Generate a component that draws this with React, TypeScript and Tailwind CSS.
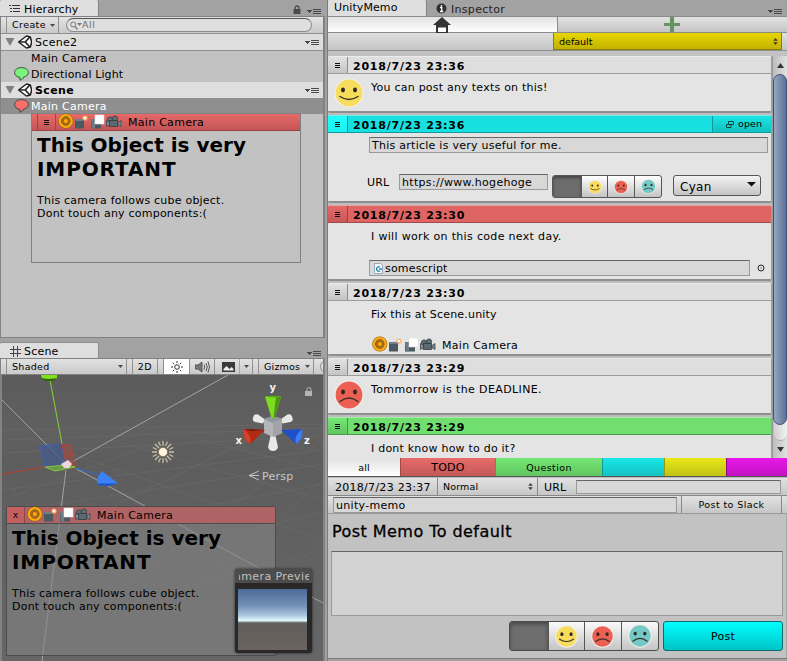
import React from "react";

const FACE_COLORS = { yellow: "#f8dc5c", red: "#ec6053", teal: "#74c9c6" } as const;

function Face({ color, size }: { color: keyof typeof FACE_COLORS; size: number }) {
  const happy = color === "yellow";
  return (
    <svg width={size} height={size} viewBox="0 0 30 30" className="shrink-0">
      <circle cx="15" cy="15" r="14.6" fill="#f2f0ea" />
      <circle cx="15" cy="15" r="13.4" fill={FACE_COLORS[color]} />
      <ellipse cx="9" cy="12" rx="2" ry="2.400" fill="#2e2a20" />
      <ellipse cx="21" cy="12" rx="2" ry="2.400" fill="#2e2a20" />
      <path
        d={happy ? "M6 18.500 Q15 24.500 24 18.500" : "M6 21.500 Q15 14.500 24 21.500"}
        fill="none"
        stroke="#3a3326"
        strokeWidth="1.500"
        strokeLinecap="round"
      />
    </svg>
  );
}

function ObjectIcons() {
  return (
    <svg width="64" height="18" viewBox="0 0 64 18" className="shrink-0">
      <circle cx="7.800" cy="8" r="7.600" fill="#8a5a14" />
      <circle cx="7.800" cy="8" r="5.800" fill="none" stroke="#ffab10" strokeWidth="2.600" />
      <circle cx="7.800" cy="8" r="4.300" fill="#b07420" stroke="#8a5a14" strokeWidth="0.800" />
      <circle cx="7.800" cy="8" r="2.600" fill="#ffa50a" stroke="#7c5520" strokeWidth="0.800" />
      <rect x="17" y="6" width="9" height="9.500" fill="#4b5960" />
      <path d="M17 6h9l-1.500 2H18z" fill="#73828a" />
      <circle cx="27" cy="5" r="2.600" fill="#ffae60" />
      <rect x="25.800" y="3.800" width="2.400" height="2.400" fill="#fff" />
      <rect x="33" y="6" width="10" height="9.500" fill="#4b5960" />
      <path d="M33 6h4v9.500h-3z" fill="#6d7b82" />
      <rect x="37" y="2" width="9" height="9" fill="#fff" stroke="#e2e2e2" strokeWidth="0.600" />
      <circle cx="52" cy="6.500" r="2.600" fill="#606e76" stroke="#323c42" strokeWidth="0.800" />
      <circle cx="57" cy="5.500" r="2.600" fill="#606e76" stroke="#323c42" strokeWidth="0.800" />
      <rect x="51.500" y="7.500" width="8" height="6" fill="#5b6970" stroke="#323c42" strokeWidth="0.800" />
      <path d="M48.500 7.500l3 1.500v3l-3 1.500z M60 9.500l3-2v6l-3-1.500z" fill="#7d8d96" stroke="#323c42" strokeWidth="0.700" />
    </svg>
  );
}

function Burger() {
  return (
    <svg width="5" height="5" viewBox="0 0 5 5" shapeRendering="crispEdges">
      <path d="M0 0h5v1H0zM0 2h5v1H0zM0 4h5v1H0z" fill="#111" />
    </svg>
  );
}

function PaneMenu() {
  return (
    <svg width="14" height="7" viewBox="0 0 14 7" className="shrink-0" shapeRendering="crispEdges">
      <path d="M0 2h5v1H4v1H3v1H2V4H1V3H0z" fill="#4a4a4a" />
      <path d="M6 1h8v1H6zM6 3h8v1H6zM6 5h8v1H6z" fill="#4a4a4a" />
    </svg>
  );
}

function Caret() {
  return (
    <svg width="5" height="3" viewBox="0 0 5 3" className="shrink-0">
      <path d="M0 0h5L2.500 3z" fill="#4c4c4c" />
    </svg>
  );
}

function UpDown() {
  return (
    <svg width="5" height="7" viewBox="0 0 5 7" className="shrink-0">
      <path d="M.3 2.800h4.400L2.500 0zM.3 4.200h4.400L2.500 7z" fill="#3a3a2a" />
    </svg>
  );
}

function UnityLogo() {
  return (
    <svg width="14" height="14" viewBox="0 0 14 14" className="shrink-0">
      <path d="M.6 7L8.500 1l3.800 1 1.100 4v2l-1.100 4-3.800 1z" fill="#fff" stroke="#222" strokeWidth="1.500" strokeLinejoin="round" />
      <path d="M1 7h6.200L11.800 2M7.200 7l4.600 5" fill="none" stroke="#222" strokeWidth="1.700" />
    </svg>
  );
}

function Balloon({ fill }: { fill: string }) {
  return (
    <svg width="15" height="14" viewBox="0 0 15 14" className="shrink-0">
      <path d="M7.500.6C3.500.6.6 2.700.6 5.600c0 2.500 2.300 4.600 5.400 4.800v2.700c2-.2 3.300-1.600 3.700-3 2.900-.7 4.700-2.400 4.700-4.600C14.400 2.700 11.500.6 7.500.6z" fill={fill} stroke="#3d4a3d" strokeWidth="1" />
    </svg>
  );
}

function SceneHeader({ name, bold }: { name: string; bold?: boolean }) {
  return (
    <div className={"flex h-full items-center bg-[#dedede] pl-[4px] pr-[4px] " + (bold ? "font-bold tracking-[0.400px]" : "tracking-[0.300px]")}>
      <svg width="10" height="8" viewBox="0 0 10 8"><path d="M.5 0h9L5 8z" fill="#818181" /></svg>
      <span className="ml-[3px]"><UnityLogo /></span>
      <span className="ml-[3px]">{name}</span>
      <span className="ml-auto"><PaneMenu /></span>
    </div>
  );
}

function NoteBody() {
  return (
    <div className="pl-[5px] pt-[2px] text-black">
      <div className="text-[20px] font-bold leading-[24px]">
        <div>This Object is very</div>
        <div className="tracking-[0.900px]">IMPORTANT</div>
      </div>
      <div className="mt-[13px] text-[11px] leading-[13px] tracking-[0.220px]">
        This camera follows cube object.<br />Dont touch any components:(
      </div>
    </div>
  );
}

function Hierarchy() {
  return (
    <section className="flex h-[338px] shrink-0 flex-col">
      <div className="flex h-[16px]">
        <div className="flex w-[99px] items-center rounded-t-[2px] border-r border-[#838383] bg-[#dedede] pl-[9px] pt-[2px] text-[11px]">
          <svg width="12" height="8" viewBox="0 0 12 8" shapeRendering="crispEdges">
            <path d="M0 0h2v1H0zM3 0h8v1H3zM1 3h2v1H1zM4 3h7v1H4zM1 6h2v1H1zM4 6h7v1H4z" fill="#333" />
          </svg>
          <span className="ml-[3px] tracking-[0.150px]">Hierarchy</span>
        </div>
        <div className="ml-auto flex items-center gap-[6px] pr-[4px] pt-[4px]">
          <svg width="8" height="10" viewBox="0 0 8 10"><path d="M.5 4h7v5h-7z" fill="#4a4a4a" /><path d="M2 4.500V3a2 2 0 0 1 4 0v1.500" fill="none" stroke="#4a4a4a" strokeWidth="1.300" /></svg>
          <div className="pt-[2px]"><PaneMenu /></div>
        </div>
      </div>
      <div className="flex grow flex-col border border-r-2 border-[#828282] bg-[#c2c2c2]">
        <div className="flex h-[16px] items-center bg-gradient-to-b from-[#e4e4e4] to-[#c9c9c9]">
          <div className="ml-[5px] flex h-full w-[53px] items-center justify-between border-x border-[#909090] pl-[5px] pr-[3px] text-[9.500px] tracking-[0.400px]">
            Create <Caret />
          </div>
          <div className="ml-[7px] flex h-[14px] w-[246px] items-center rounded-full border border-[#8d8d8d] border-t-[#555] bg-[#dfdfdf] pl-[3px] text-[9.500px] text-[#6f6f6f]">
            <svg width="12" height="9" viewBox="0 0 12 9"><circle cx="3.200" cy="3.500" r="2.500" fill="none" stroke="#777" /><path d="M5 5.500l2.500 3" stroke="#777" strokeWidth="1.200" /><path d="M7 2h5L9.500 5z" fill="#777" /></svg>
            <span className="tracking-[0.500px]">All</span>
          </div>
        </div>
        <div className="flex flex-col text-[11px]">
          <div className="h-[18px] border-y border-[#909090]"><SceneHeader name="Scene2" /></div>
          <div className="flex h-[15px] items-center pl-[30px] tracking-[0.250px]">Main Camera</div>
          <div className="flex h-[16px] items-center gap-[2px] pl-[13px] tracking-[0.100px]"><Balloon fill="#79f57b" />Directional Light</div>
          <div className="h-[16px]"><SceneHeader name="Scene" bold /></div>
          <div className="flex h-[16px] items-center gap-[2px] bg-[#8f8f8f] pl-[13px] tracking-[0.250px] text-white"><Balloon fill="#fa6e6c" />Main Camera</div>
        </div>
        <div className="ml-[30px] mt-[-1px] h-[150px] w-[270px] border border-[#808080]">
          <div className="flex h-[17px] items-center border-b border-[#944] bg-gradient-to-b from-[#e76969] to-[#c45656] text-[11px]">
            <div className="ml-[5px] flex h-full w-[19px] items-center justify-center border-x border-[#9c4545]"><Burger /></div>
            <div className="ml-[2px] flex"><ObjectIcons /></div>
            <span className="ml-[6px] pt-px tracking-[0.280px]">Main Camera</span>
          </div>
          <NoteBody />
        </div>
      </div>
    </section>
  );
}

function SceneDrawing() {
  return (
    <svg width="321" height="286" viewBox="2 375 321 286" className="block">
      <defs>
        <linearGradient id="ground" x1="0" y1="0" x2="0" y2="1">
          <stop offset="0" stopColor="#5b5b5b" />
          <stop offset="0.200" stopColor="#606060" />
          <stop offset="0.300" stopColor="#5d5d5d" />
          <stop offset="1" stopColor="#666" />
        </linearGradient>
      </defs>
      <rect x="2" y="375" width="321" height="286" fill="url(#ground)" />
      <g stroke="#6d6d6d" strokeWidth="0.800" opacity="0.700">
        <path d="M2 430L323 424M2 440L323 428M2 453L323 436M2 490L323 450M2 512L323 464M2 545L323 484M2 590L323 512M2 640L323 550M90 661L323 590" />
        <path d="M2 480L190 661M2 545L110 661M30 440L323 540M110 440L323 500M200 440L323 470M90 470L323 640M60 480L270 661M190 430L2 500M270 430L2 560M323 440L20 661M323 480L110 661M323 540L200 661" />
      </g>
      <path d="M2 400L65 463M228 375L70 463M75 468L323 603M66 470L42 661" stroke="#a3a3a3" />
      <path d="M2 474L45 467" stroke="#b8402c" />
      <path d="M50 380L62 444" stroke="#7fc83a" strokeWidth="1.200" />
      <path d="M41 375h16v3l-3 2H45l-3-2z" fill="#7fe01c" />
      <path d="M42 378q7 2 14 0l-2 3h-9z" fill="#2f6410" />
      <path d="M40 446l22-2 4 22-21 1z" fill="#44598e" fillOpacity="0.750" stroke="#3c62c0" />
      <path d="M62 444l9 1.500 4 22-9-4z" fill="#984b47" fillOpacity="0.700" stroke="#b8432f" />
      <path d="M45 467l21-2 9 2-20 4z" fill="#6a9a45" stroke="#80c83c" />
      <path d="M61 464l7-4 4 4-3 4h-5z" fill="#efd6dc" />
      <path d="M75 468L99 475" stroke="#3267c9" strokeWidth="1.200" />
      <path d="M102 471Q96 477 98 485L108 486 118 483.500z" fill="#3a82f7" />
      <path d="M98 483.500L118 483.500 108 486 98 485z" fill="#1c52bd" />
      <g stroke="#c8c0a4" strokeWidth="1.300">
        <path d="M163 441v5M163 458v5M152 452h5M169 452h5M155 444l4 4M167 456l4 4M171 444l-4 4M159 456l-4 4M158.500 441.800l2 4M167.500 441.800l-2 4M158.500 462.200l2-4M167.500 462.200l-2-4M152.800 447.500l4 2M173.200 447.500l-4 2M152.800 456.500l4-2M173.200 456.500l-4-2" />
      </g>
      <circle cx="163" cy="452" r="4.600" fill="#fff3dc" stroke="#857b62" strokeWidth="1" />
      <path d="M253 418q1-5 5-3.500l7 5-2 4-8-1.500q-3-1-2-4zM292.500 418q-1-5-5-3.500l-7 5 2 4 8-1.500q3-1 2-4zM271 434h4l3 13q-1 4-5 4t-5-4z" fill="#e8e8e8" />
      <path d="M264 419l9-3 9 3v14l-9 4-9-4z" fill="#b3b5b8" />
      <path d="M264 419l9-3 9 3-9 4z" fill="#8f979d" />
      <path d="M273 423l9-4v14l-9 4z" fill="#a2a4a8" />
      <path d="M265 396.500h16L274.500 418h-3z" fill="#7ddb22" />
      <path d="M276 396.500h5L274.500 418h-1z" fill="#4c9610" />
      <path d="M265 396.500q8-1.500 16 0-8 2-16 0z" fill="#5cab18" />
      <path d="M244 429l21 1-15 14q-8-5-6-15z" fill="#b02a15" />
      <path d="M244 429q-2 10 6 15 3-7-6-15z" fill="#d8402a" />
      <path d="M244 429l21 1-13 1z" fill="#6e150a" />
      <path d="M302 429l-21 1 15 14q8-5 6-15z" fill="#1f50c8" />
      <path d="M302 429q2 10-6 15-3-7 6-15z" fill="#3f7df5" />
      <g fill="#f4f4f4" fontFamily="'DejaVu Sans'" fontWeight="bold" fontSize="10">
        <text x="269.500" y="391">y</text>
        <text x="235.500" y="444">x</text>
        <text x="304" y="444">z</text>
      </g>
      <path d="M259 471l-10 4.500 10 4.500M249 475.500h10" stroke="#c0c0c0" fill="none" />
      <text x="262" y="480" fill="#c6c6c6" fontFamily="'DejaVu Sans'" fontSize="11" letterSpacing="0.250">Persp</text>
      <rect x="305" y="391" width="7" height="5" fill="#b4b4b4" />
      <path d="M307 391v-1.500a2 2 0 0 1 4 0V391" fill="none" stroke="#b4b4b4" />
    </svg>
  );
}

function SceneView() {
  return (
    <section className="flex grow flex-col pt-[4px]">
      <div className="flex h-[16px]">
        <div className="flex w-[99px] items-center rounded-t-[2px] border-r border-t border-[#8d8d8d] bg-[#dedede] pl-[10px] pt-[2px] text-[11px]">
          <svg width="11" height="11" viewBox="0 0 11 11"><path d="M3.500 0v11M7.500 0v11M0 3.500h11M0 7.500h11" stroke="#444" /></svg>
          <span className="ml-[3px] tracking-[0.200px]">Scene</span>
        </div>
        <div className="ml-auto flex items-center pr-[4px] pt-[7px]"><PaneMenu /></div>
      </div>
      <div className="flex h-[17px] w-[325px] overflow-hidden border border-r-2 border-[#828282] bg-gradient-to-b from-[#e2e2e2] to-[#cacaca] text-[9.500px] tracking-[0.500px]">
        <div className="ml-[5px] flex w-[121px] shrink-0 items-center justify-between border-x border-[#909090] pl-[5px] pr-[3px] tracking-[0.300px]">Shaded <Caret /></div>
        <div className="ml-[5px] flex w-[26px] shrink-0 items-center justify-center border-x border-[#909090]">2D</div>
        <div className="ml-[5px] flex w-[27px] shrink-0 items-center justify-center border-x border-[#909090] bg-white">
          <svg width="12" height="12" viewBox="0 0 12 12"><circle cx="6" cy="6" r="2.300" fill="none" stroke="#333" /><path d="M6 0v2M6 10v2M0 6h2M10 6h2M1.800 1.800l1.300 1.300M8.900 8.900l1.300 1.300M10.200 1.800L8.900 3.100M3.100 8.900l-1.300 1.300" stroke="#333" /></svg>
        </div>
        <div className="flex w-[25px] shrink-0 items-center justify-center border-r border-[#909090]">
          <svg width="15" height="12" viewBox="0 0 15 12"><path d="M0 4h3l4-3v10l-4-3H0z" fill="#777" stroke="#444" strokeWidth="0.800" /><path d="M9 3.500q1.500 2.500 0 5M11 2q2.500 4 0 8M13 .5q3 5.500 0 11" fill="none" stroke="#555" /></svg>
        </div>
        <div className="flex w-[38px] shrink-0 items-center gap-[4px] border-r border-[#909090] pl-[7px]">
          <svg width="13" height="10" viewBox="0 0 13 10" className="shrink-0"><rect width="13" height="10" fill="#3a3a3a" /><path d="M1.500 8.500V7l3-3 3 3 2-2 2 2v1.500z" fill="#eee" /></svg>
          <div className="h-full w-px bg-[#aaa]" />
          <Caret />
        </div>
        <div className="ml-[5px] flex w-[56px] shrink-0 items-center justify-between border-x border-[#909090] pl-[5px] pr-[3px] tracking-[0.200px]">Gizmos <Caret /></div>
        <div className="ml-[6px] mt-px h-[13px] w-[24px] shrink-0 rounded-full border border-[#888] bg-[#ddd]" />
      </div>
      <div className="relative grow overflow-hidden border-r-2 border-[#828282] bg-[#828282] pl-[2px]">
        <SceneDrawing />
        <div className="absolute left-[6px] top-[131px] h-[150px] w-[270px] rounded-t-[2px] border border-[#4c4c4c] bg-[#848484]/60">
          <div className="flex h-[17px] items-center border-b border-[#4c4c4c] bg-[#b86262]/85 text-[11px]">
            <div className="flex h-full w-[18px] items-center justify-center border-r border-[#8d4747] bg-[#c45f5f] text-[9px]">x</div>
            <div className="ml-[2px] flex"><ObjectIcons /></div>
            <span className="ml-[6px] pt-px tracking-[0.280px]">Main Camera</span>
          </div>
          <NoteBody />
        </div>
        <div className="absolute left-[235px] top-[194px] flex h-[84px] w-[77px] flex-col rounded-[3px] bg-[#282828] pb-[3px] shadow-[0_0_3px_#222]">
          <div className="mb-[6px] flex h-[14px] items-center justify-center overflow-hidden rounded-t-[3px] bg-[#4c4c4c] pt-px text-[11px] tracking-[0.400px] text-[#c0c0c0]">
            <div className="flex h-[13px] w-[70px] items-center justify-center overflow-hidden whitespace-nowrap"><span className="shrink-0">Camera Preview</span></div>
          </div>
          <div className="ml-[3px] h-[61px] w-[69px] bg-[linear-gradient(to_bottom,#4c6a98_0%,#7491b8_28%,#a9c6dd_43%,#e2fbff_52%,#8d9a98_54%,#615d5a_56%,#6b6460_100%)]" />
        </div>
      </div>
    </section>
  );
}

const HEADER_TONES = {
  gray: "bg-[#dedede] border-[#9c9c9c]",
  cyan: "bg-[#18e0e0] border-[#119a9a]",
  red: "bg-[#df6464] border-[#a04a4a]",
  green: "bg-[#70df70] border-[#4d9a4d]",
} as const;

const BUTTON_TONES = {
  gray: "from-[#e2e2e2] to-[#c4c4c4] border-[#8c8c8c]",
  cyan: "from-[#20ffff] to-[#1cf0f0] border-[#119a9a]",
  red: "from-[#e66868] to-[#c65858] border-[#984545]",
  green: "from-[#74e874] to-[#62c462] border-[#4a934a]",
} as const;

type CardProps = {
  tone: keyof typeof HEADER_TONES;
  time: string;
  height: string;
  action?: React.ReactNode;
  children: React.ReactNode;
};

function Card({ tone, time, height, action, children }: CardProps) {
  return (
    <article className={"flex shrink-0 flex-col overflow-hidden rounded-[2px] border-b-2 border-r border-b-[#8f8f8f] border-r-[#a0a0a0] bg-[#e4e4e4] " + height}>
      <div className={"flex h-[18px] shrink-0 items-center border-b border-t border-t-white/40 " + HEADER_TONES[tone]}>
        <div className={"flex h-full w-[20px] items-center justify-center border-r bg-gradient-to-b " + BUTTON_TONES[tone]}><Burger /></div>
        <span className="ml-[5px] pt-[2px] text-[11px] font-bold tracking-[0.780px]">{time}</span>
        {action}
      </div>
      <div className="grow text-[11px]">{children}</div>
    </article>
  );
}

const FIELD = "flex items-center border border-[#9a9a9a] border-t-[#666] bg-[#d8d8d8] ";

function CardList() {
  return (
    <div className="flex h-[402px] overflow-hidden">
      <div className="flex w-[444px] flex-col gap-[2px] overflow-hidden bg-[#bdbdbd]">
        <Card tone="gray" time="2018/7/23 23:36" height="h-[57px]">
          <div className="flex pl-[6px] pt-[4px]"><Face color="yellow" size={30} /><span className="ml-[7px] mt-[4px] tracking-[0.240px]">You can post any texts on this!</span></div>
        </Card>
        <Card tone="cyan" time="2018/7/23 23:36" height="h-[88px]"
          action={<div className="ml-auto flex h-full w-[59px] items-center gap-[4px] border-l border-[#119a9a] bg-gradient-to-b from-[#1be6e6] to-[#14c0c0] pl-[13px] text-[9.500px] tracking-[0.100px]">
            <svg width="8" height="7" viewBox="0 0 8 7"><path d="M2.500.5h5v3h-5zM5 3.500v3H.5v-3h2" fill="none" stroke="#144" /></svg>open
          </div>}>
          <div className={FIELD + "ml-[41px] mt-[4px] h-[16px] w-[399px] pl-[2px] tracking-[0.260px]"}>This article is very useful for me.</div>
          <div className="mt-[21px] flex pl-[39px]">
            <span className="mt-[3px] w-[32px] tracking-[0.200px]">URL</span>
            <div className={FIELD + "h-[16px] w-[149px] pl-[2px] tracking-[0.320px]"}>https://www.hogehoge</div>
            <div className="ml-[4px] mt-px flex h-[23px] w-[110px] overflow-hidden rounded-[3px] border border-[#555] bg-gradient-to-b from-white to-[#c4c4c4]">
              <div className="w-[28px] bg-[#6c6c6c] shadow-[inset_0_2px_3px_#444]" />
              <div className="flex w-[27px] items-center justify-center border-l border-[#555]"><Face color="yellow" size={14} /></div>
              <div className="flex w-[27px] items-center justify-center border-l border-[#555]"><Face color="red" size={14} /></div>
              <div className="flex w-[27px] items-center justify-center border-l border-[#555]"><Face color="teal" size={15} /></div>
            </div>
            <div className="ml-[11px] mt-px flex h-[21px] w-[88px] items-center justify-between rounded-[3px] border border-[#555] bg-gradient-to-b from-[#f4f4f4] to-[#c4c4c4] pl-[6px] pr-[4px] pt-[2px] text-[12px] tracking-[0.300px]">
              Cyan <svg width="9" height="5" viewBox="0 0 9 5" className="mb-[4px]"><path d="M0 0h9L4.500 4.500z" fill="#111" /></svg>
            </div>
          </div>
        </Card>
        <Card tone="red" time="2018/7/23 23:30" height="h-[76px]">
          <div className="ml-[43px] mt-[7px] leading-[13px] tracking-[0.330px]">I will work on this code next day.</div>
          <div className="mt-[17px] flex items-center">
            <div className={FIELD + "ml-[41px] h-[16px] w-[381px] pl-[4px] tracking-[0.200px]"}>
              <svg width="9" height="11" viewBox="0 0 9 11" className="mr-[2px]"><path d="M.5.5h6l2 2v8h-8z" fill="#f2f7fa" stroke="#9ab" /><path d="M6 4a2.300 2.300 0 1 0 0 4M5 6h3" fill="none" stroke="#2687b5" strokeWidth="1.400" /></svg>
              somescript
            </div>
            <svg width="8" height="8" viewBox="0 0 8 8" className="ml-[7px]"><circle cx="4" cy="4" r="3" fill="none" stroke="#222" /><rect x="3.500" y="3.500" width="1" height="1" fill="#222" /></svg>
          </div>
        </Card>
        <Card tone="gray" time="2018/7/23 23:30" height="h-[73px]">
          <div className="ml-[43px] mt-[7px] leading-[13px] tracking-[0.180px]">Fix this at Scene.unity</div>
          <div className="ml-[44px] mt-[15px] flex items-center"><ObjectIcons /><span className="ml-[6px] mt-px tracking-[0.280px]">Main Camera</span></div>
        </Card>
        <Card tone="gray" time="2018/7/23 23:29" height="h-[57px]">
          <div className="flex pl-[6px] pt-[4px]"><Face color="red" size={30} /><span className="ml-[7px] mt-[4px] tracking-[0.390px]">Tommorrow is the DEADLINE.</span></div>
        </Card>
        <Card tone="green" time="2018/7/23 23:29" height="h-[57px]">
          <div className="ml-[43px] mt-[7px] leading-[13px] tracking-[0.220px]">I dont know how to do it?</div>
        </Card>
      </div>
      <div className="flex w-[15px] flex-col items-center border-l border-[#999] bg-gradient-to-r from-[#bdbdbd] to-[#e2e2e2]">
        <div className="flex h-[18px] shrink-0 items-center"><svg width="7" height="5" viewBox="0 0 7 5"><path d="M0 5h7L3.500 0z" fill="#333" /></svg></div>
        <div className="z-10 h-[351px] w-[14px] shrink-0 rounded-full border border-[#3f5374] bg-gradient-to-r from-[#96a7c2] to-[#5c7196]" />
        <div className="-mt-2 h-[24px] w-[13px] shrink-0 rounded-b-full border-b border-[#aaa] bg-gradient-to-r from-[#d0d0d0] to-[#f2f2f2]" />
        <div className="mt-[6px]"><svg width="7" height="5" viewBox="0 0 7 5"><path d="M0 0h7L3.500 5z" fill="#333" /></svg></div>
      </div>
    </div>
  );
}

function MemoPane() {
  return (
    <section className="flex w-[459px] flex-col">
      <div className="flex h-[16px] text-[11px]">
        <div className="w-[99px] rounded-tr-[2px] border-r border-[#808080] bg-[#dedede] pl-[6px] leading-[16px] tracking-[0.100px]">UnityMemo</div>
        <div className="ml-[9px] flex items-center gap-[4px] text-[#222]">
          <svg width="11" height="11" viewBox="0 0 11 11"><circle cx="5.500" cy="5.500" r="5" fill="#303030" /><path d="M5.500 2v1.500M4 4.500h1.700V8M4 8.500h3.300" stroke="#fff" strokeWidth="1.300" fill="none" /></svg>
          <span className="mt-[2px] tracking-[0.300px]">Inspector</span>
        </div>
        <div className="ml-auto flex items-center pr-[5px] pt-[7px]"><PaneMenu /></div>
      </div>
      <div className="flex h-[17px] border-y border-[#8a8a8a]">
        <div className="flex w-[230px] items-center justify-center border-r border-[#8a8a8a] bg-gradient-to-b from-[#e2e2e2] to-white pr-px">
          <svg width="18" height="16" viewBox="0 0 18 16"><path d="M9 0l9 8h-3v8H3V8H0z" fill="#333" /><path d="M5 10.500h8V15H5z" fill="#fff" /></svg>
        </div>
        <div className="flex grow items-center justify-center bg-gradient-to-b from-[#e2e2e2] to-[#c4c4c4] pr-px">
          <svg width="16" height="15" viewBox="0 0 16 15"><path d="M6 0h4v6h6v3h-6v6H6V9H0V6h6z" fill="#669264" /></svg>
        </div>
      </div>
      <div className="flex h-[18px] border-b border-[#8f8f8f] bg-gradient-to-b from-[#e0e0e0] to-[#c4c4c4]">
        <div className="ml-[225px] flex w-[229px] items-center justify-between border-x border-b border-[#8b7d05] bg-gradient-to-b from-[#e8d600] to-[#c2b200] pl-[5px] pr-[3px] pt-px text-[9.500px]">
          default <UpDown />
        </div>
      </div>
      <div className="h-[5px] bg-[#c2c2c2]" />
      <CardList />
      <div className="flex h-[18px] text-[9.500px] tracking-[0.200px]">
        <div className="flex w-[72px] items-center justify-center bg-gradient-to-b from-[#e2e2e2] to-white pt-px">all</div>
        <div className="flex w-[95px] items-center justify-center border-l border-[#a04a4a] bg-gradient-to-b from-[#e86b6b] to-[#c45858] pt-px text-[11px]">TODO</div>
        <div className="flex w-[107px] items-center justify-center border-l border-[#4d9a4d] bg-gradient-to-b from-[#74e874] to-[#62c462] pt-px tracking-[0.400px]">Question</div>
        <div className="w-[62px] border-l border-[#119a9a] bg-gradient-to-b from-[#18e8e8] to-[#14c2c2]" />
        <div className="w-[62px] border-l border-[#99990e] bg-gradient-to-b from-[#e8e818] to-[#c2c214]" />
        <div className="grow border-l border-[#8a0e8a] bg-gradient-to-b from-[#e818e8] to-[#c214c2]" />
      </div>
      <div className="h-[2px] border-b border-white/60 bg-[#555]" />
      <div className="flex h-[18px] items-center border-b border-[#888] bg-gradient-to-b from-[#e2e2e2] to-[#c6c6c6] text-[11px]">
        <div className="flex h-full w-[110px] items-center border-r border-[#888] pl-[7px] pt-[2px] tracking-[0.280px]">2018/7/23 23:37</div>
        <div className="flex h-full w-[100px] items-center justify-between border-r border-[#888] pl-[5px] pr-[4px] text-[9.500px] tracking-[0.150px]">Normal <UpDown /></div>
        <span className="ml-[6px] w-[32px] pt-[2px] tracking-[0.200px]">URL</span>
        <div className={FIELD + "h-[14px] w-[205px]"} />
      </div>
      <div className="flex h-[18px] items-center border-b border-[#999] bg-gradient-to-b from-[#e2e2e2] to-[#c6c6c6] text-[11px]">
        <div className={FIELD + "ml-[5px] h-[16px] w-[344px] pl-[2px] pt-px tracking-[0.300px]"}>unity-memo</div>
        <div className="ml-[4px] flex h-full w-[101px] items-center justify-center border-x border-[#888] text-[9.500px] tracking-[0.400px]">Post to Slack</div>
      </div>
      <div className="flex grow flex-col border-r border-[#aaa] bg-[#c2c2c2] px-[3px]">
        <div className="mt-[9px] h-[28px] pl-[1px] text-[16px] leading-[18px] tracking-[0.450px] [-webkit-text-stroke:0.300px_#000]">Post Memo To default</div>
        <div className="h-[65px] border border-[#999] border-t-[#666] bg-[#d3d3d3]" />
        <div className="mt-[5px] flex justify-end gap-[4px]">
          <div className="flex h-[30px] w-[150px] overflow-hidden rounded-[3px] border border-[#4c4c4c] bg-gradient-to-b from-[#fafafa] to-[#c4c4c4]">
            <div className="w-[38px] bg-[#6e6e6e] shadow-[inset_0_2px_4px_#444]" />
            <div className="flex w-[37px] items-center justify-center border-l border-[#555] pr-px"><Face color="yellow" size={23} /></div>
            <div className="flex w-[37px] items-center justify-center border-l border-[#555] pr-px"><Face color="red" size={23} /></div>
            <div className="flex w-[37px] items-center justify-center border-l border-[#555]"><Face color="teal" size={24} /></div>
          </div>
          <div className="flex h-[30px] w-[120px] items-center justify-center rounded-[3px] border border-[#146a6a] bg-gradient-to-b from-[#00ffff] to-[#00c4c6] text-[11px] tracking-[0.300px]">Post</div>
        </div>
      </div>
      <div className="h-[3px] border-t border-[#777] bg-[#a2a2a2]" />
    </section>
  );
}

export default function App() {
  return (
    <main className="flex h-[661px] w-[787px] overflow-hidden whitespace-nowrap bg-[#a2a2a2] font-['DejaVu_Sans',sans-serif] leading-none text-black">
      <div className="flex w-[325px] flex-col">
        <Hierarchy />
        <SceneView />
      </div>
      <div className="w-[3px] border-r border-[#7c7c7c]" />
      <MemoPane />
    </main>
  );
}
